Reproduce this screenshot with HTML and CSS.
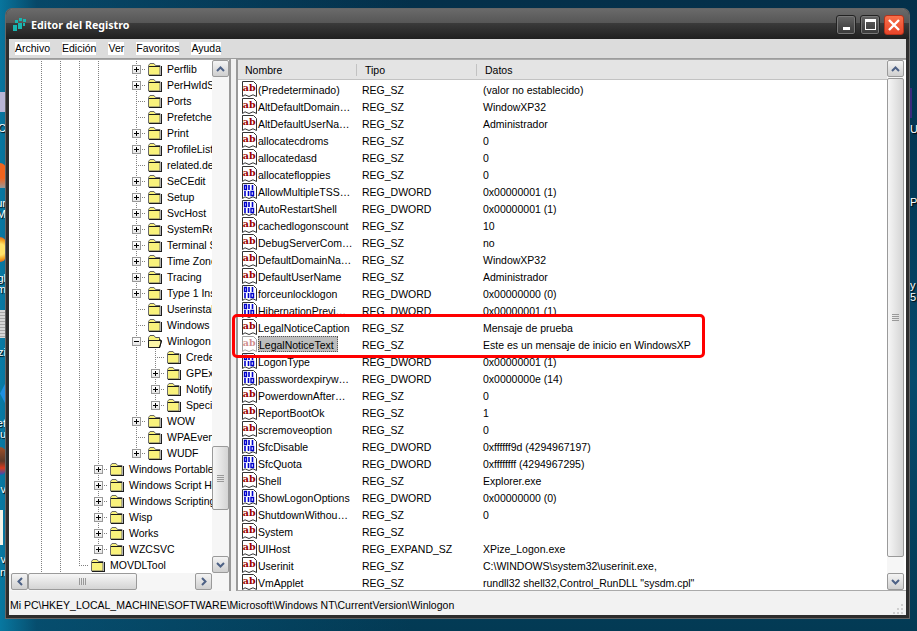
FILE: index.html
```html
<!DOCTYPE html>
<html lang="es">
<head>
  <meta charset="UTF-8" />
  <title>Editor del Registro</title>
  <link rel="stylesheet" href="styles.css">
</head>
<body>
  <svg class="defs" width="0" height="0">
    <symbol id="ab" viewBox="0 0 16 16">
      <path d="M1.5 .5H12.5L15.5 3.5V15.5L12 13.8 8 15.5 4 13.8 1.5 15.5Z" fill="#fff" stroke="#333"/>
      <text x="1.8" y="9.5" class="ab-text">ab</text>
    </symbol>
    <symbol id="bin" viewBox="0 0 16 16">
      <path d="M1.5 .5H12.5L15.5 3.5V15.5L12 13.8 8 15.5 4 13.8 1.5 15.5Z" fill="#fff" stroke="#333"/>
      <path d="M3.5 2.5h2v4h-2zM10 8.5h2.500v4H10z" fill="none" stroke="#00c" stroke-width="1.4"/>
      <path d="M8 2v5M11.500 2v5M4 8v5M7.500 8v5" stroke="#00c" stroke-width="1.6"/>
    </symbol>
    <symbol id="folder" viewBox="0 0 15 15">
      <path d="M1.500 3.500L3 1.500H7L8.500 3.500H13V13H1.500Z" fill="#f9f27c" stroke="#6a6a6a"/>
      <path d="M2 4h11v1H2zM14 4h1v10H2v-1h12z" fill="#1c1c1c"/>
    </symbol>
    <symbol id="folder-open" viewBox="0 0 15 15">
      <path d="M1.500 3.500L3 1.500H7L8.500 3.500H12.500V13.500H1.500Z" fill="#f9f27c" stroke="#555"/>
      <path d="M1.500 6.500H14.500L12.500 13.500H1.500Z" fill="#fbf6a8" stroke="#222"/>
      <path d="M13 5v2h1.500l-2 7" fill="none" stroke="#111"/>
    </symbol>
  </svg>

  <div class="desk-bit bit-lilac"></div>
  <div class="desk-bit bit-orange"></div>
  <div class="desk-bit bit-sun"></div>
  <div class="desk-bit bit-stripe"></div>
  <div class="desk-bit bit-blue"></div>
  <div class="desk-bit bit-fire"></div>
  <div class="desk-bit bit-paper"></div>
  <div class="desk-bit bit-purple"></div>
  <span class="desk-label left lb-1">C</span>
  <span class="desk-label left lb-2">ur</span>
  <span class="desk-label left lb-3">M</span>
  <span class="desk-label left lb-4">gl</span>
  <span class="desk-label left lb-5">m</span>
  <span class="desk-label left lb-6">zi</span>
  <span class="desk-label left lb-7">et</span>
  <span class="desk-label left lb-8">lu</span>
  <span class="desk-label left lb-9">v</span>
  <span class="desk-label left lb-10">v</span>
  <span class="desk-label left lb-11">n</span>
  <span class="desk-label right lb-12">U</span>
  <span class="desk-label right lb-13">Pr</span>
  <span class="desk-label right lb-14">y</span>
  <span class="desk-label right lb-15">5</span>

  <div class="window">
    <div class="titlebar">
      <svg class="app-icon" viewBox="0 0 15 15" width="15" height="15">
        <path d="M1 8h4v6H1zM6 6h4v6H6zM3 3h3v3H3zM7 1h3v3H7zM11 2h3v3h-3zM11 6h2v3h-2z" fill="#19b5b0"/>
      </svg>
      <span class="title">Editor del Registro</span>
      <div class="caption-btns">
        <button class="cap-btn"><span class="ico-min"></span></button>
        <button class="cap-btn"><span class="ico-max"></span></button>
        <button class="cap-btn cap-close">
          <svg viewBox="0 0 12 12" width="12" height="12"><path d="M1 1L11 11M11 1L1 11" stroke="#fff" stroke-width="2.4"/></svg>
        </button>
      </div>
    </div>

    <div class="menubar">
      <span>Archivo</span><span>Edición</span><span>Ver</span><span>Favoritos</span><span>Ayuda</span>
    </div>

    <div class="panes">
      <div class="tree-pane">
        <div class="tree-main">
          <div class="tree-rows">
            <div class="node l5 plus"><b></b><svg><use href="#folder"/></svg><span>Perflib</span></div>
            <div class="node l5 plus"><b></b><svg><use href="#folder"/></svg><span>PerHwIdStorage</span></div>
            <div class="node l5"><b></b><svg><use href="#folder"/></svg><span>Ports</span></div>
            <div class="node l5"><b></b><svg><use href="#folder"/></svg><span>Prefetcher</span></div>
            <div class="node l5 plus"><b></b><svg><use href="#folder"/></svg><span>Print</span></div>
            <div class="node l5 plus"><b></b><svg><use href="#folder"/></svg><span>ProfileList</span></div>
            <div class="node l5"><b></b><svg><use href="#folder"/></svg><span>related.desc</span></div>
            <div class="node l5 plus"><b></b><svg><use href="#folder"/></svg><span>SeCEdit</span></div>
            <div class="node l5 plus"><b></b><svg><use href="#folder"/></svg><span>Setup</span></div>
            <div class="node l5 plus"><b></b><svg><use href="#folder"/></svg><span>SvcHost</span></div>
            <div class="node l5 plus"><b></b><svg><use href="#folder"/></svg><span>SystemRestore</span></div>
            <div class="node l5 plus"><b></b><svg><use href="#folder"/></svg><span>Terminal Server</span></div>
            <div class="node l5 plus"><b></b><svg><use href="#folder"/></svg><span>Time Zones</span></div>
            <div class="node l5 plus"><b></b><svg><use href="#folder"/></svg><span>Tracing</span></div>
            <div class="node l5 plus"><b></b><svg><use href="#folder"/></svg><span>Type 1 Installer</span></div>
            <div class="node l5"><b></b><svg><use href="#folder"/></svg><span>Userinstallable</span></div>
            <div class="node l5"><b></b><svg><use href="#folder"/></svg><span>Windows</span></div>
            <div class="node l5 minus"><b></b><svg><use href="#folder-open"/></svg><span>Winlogon</span></div>
            <div class="node l6"><b></b><svg><use href="#folder"/></svg><span>Credentials</span></div>
            <div class="node l6 plus"><b></b><svg><use href="#folder"/></svg><span>GPExtensions</span></div>
            <div class="node l6 plus"><b></b><svg><use href="#folder"/></svg><span>Notify</span></div>
            <div class="node l6 plus last"><b></b><svg><use href="#folder"/></svg><span>SpecialAccounts</span></div>
            <div class="node l5 plus"><b></b><svg><use href="#folder"/></svg><span>WOW</span></div>
            <div class="node l5"><b></b><svg><use href="#folder"/></svg><span>WPAEvents</span></div>
            <div class="node l5 plus last"><b></b><svg><use href="#folder"/></svg><span>WUDF</span></div>
            <div class="node l3 plus"><b></b><svg><use href="#folder"/></svg><span>Windows Portable Devices</span></div>
            <div class="node l3 plus"><b></b><svg><use href="#folder"/></svg><span>Windows Script Host</span></div>
            <div class="node l3 plus"><b></b><svg><use href="#folder"/></svg><span>Windows Scripting Host</span></div>
            <div class="node l3 plus"><b></b><svg><use href="#folder"/></svg><span>Wisp</span></div>
            <div class="node l3 plus"><b></b><svg><use href="#folder"/></svg><span>Works</span></div>
            <div class="node l3 plus last"><b></b><svg><use href="#folder"/></svg><span>WZCSVC</span></div>
            <div class="node l2 last"><b></b><svg><use href="#folder"/></svg><span>MOVDLTool</span></div>
          </div>
          <div class="vscroll">
            <button class="sb-btn"><svg viewBox="0 0 9 6" width="9" height="6"><path d="M1 5L4.500 1.500 8 5" fill="none" stroke="#4d6185" stroke-width="2"/></svg></button>
            <div class="sb-track tree-track"><div class="sb-thumb tree-thumb"><i></i></div></div>
            <button class="sb-btn"><svg viewBox="0 0 9 6" width="9" height="6"><path d="M1 1L4.500 4.500 8 1" fill="none" stroke="#4d6185" stroke-width="2"/></svg></button>
          </div>
        </div>
        <div class="hscroll">
          <button class="sb-btn"><svg viewBox="0 0 6 9" width="6" height="9"><path d="M5 1L1.500 4.500 5 8" fill="none" stroke="#4d6185" stroke-width="2"/></svg></button>
          <div class="sb-track h-track"><div class="sb-thumb h-thumb"><i></i></div></div>
          <button class="sb-btn"><svg viewBox="0 0 6 9" width="6" height="9"><path d="M1 1L4.500 4.500 1 8" fill="none" stroke="#4d6185" stroke-width="2"/></svg></button>
        </div>
      </div>

      <div class="list-pane">
        <div class="list-main">
          <div class="list-head">
            <span class="c-name">Nombre</span><span class="c-type">Tipo</span><span class="c-data">Datos</span>
          </div>
          <div class="list-rows">
            <div class="row"><svg><use href="#ab"/></svg><span class="c-name">(Predeterminado)</span><span class="c-type">REG_SZ</span><span class="c-data">(valor no establecido)</span></div>
            <div class="row"><svg><use href="#ab"/></svg><span class="c-name">AltDefaultDomain…</span><span class="c-type">REG_SZ</span><span class="c-data">WindowXP32</span></div>
            <div class="row"><svg><use href="#ab"/></svg><span class="c-name">AltDefaultUserNa…</span><span class="c-type">REG_SZ</span><span class="c-data">Administrador</span></div>
            <div class="row"><svg><use href="#ab"/></svg><span class="c-name">allocatecdroms</span><span class="c-type">REG_SZ</span><span class="c-data">0</span></div>
            <div class="row"><svg><use href="#ab"/></svg><span class="c-name">allocatedasd</span><span class="c-type">REG_SZ</span><span class="c-data">0</span></div>
            <div class="row"><svg><use href="#ab"/></svg><span class="c-name">allocatefloppies</span><span class="c-type">REG_SZ</span><span class="c-data">0</span></div>
            <div class="row"><svg><use href="#bin"/></svg><span class="c-name">AllowMultipleTSS…</span><span class="c-type">REG_DWORD</span><span class="c-data">0x00000001 (1)</span></div>
            <div class="row"><svg><use href="#bin"/></svg><span class="c-name">AutoRestartShell</span><span class="c-type">REG_DWORD</span><span class="c-data">0x00000001 (1)</span></div>
            <div class="row"><svg><use href="#ab"/></svg><span class="c-name">cachedlogonscount</span><span class="c-type">REG_SZ</span><span class="c-data">10</span></div>
            <div class="row"><svg><use href="#ab"/></svg><span class="c-name">DebugServerCom…</span><span class="c-type">REG_SZ</span><span class="c-data">no</span></div>
            <div class="row"><svg><use href="#ab"/></svg><span class="c-name">DefaultDomainNa…</span><span class="c-type">REG_SZ</span><span class="c-data">WindowXP32</span></div>
            <div class="row"><svg><use href="#ab"/></svg><span class="c-name">DefaultUserName</span><span class="c-type">REG_SZ</span><span class="c-data">Administrador</span></div>
            <div class="row"><svg><use href="#bin"/></svg><span class="c-name">forceunlocklogon</span><span class="c-type">REG_DWORD</span><span class="c-data">0x00000000 (0)</span></div>
            <div class="row"><svg><use href="#bin"/></svg><span class="c-name">HibernationPrevi…</span><span class="c-type">REG_DWORD</span><span class="c-data">0x00000001 (1)</span></div>
            <div class="row"><svg><use href="#ab"/></svg><span class="c-name">LegalNoticeCaption</span><span class="c-type">REG_SZ</span><span class="c-data">Mensaje de prueba</span></div>
            <div class="row selected"><svg><use href="#ab"/></svg><span class="c-name"><em>LegalNoticeText</em></span><span class="c-type">REG_SZ</span><span class="c-data">Este es un mensaje de inicio en WindowsXP</span></div>
            <div class="row"><svg><use href="#bin"/></svg><span class="c-name">LogonType</span><span class="c-type">REG_DWORD</span><span class="c-data">0x00000001 (1)</span></div>
            <div class="row"><svg><use href="#bin"/></svg><span class="c-name">passwordexpiryw…</span><span class="c-type">REG_DWORD</span><span class="c-data">0x0000000e (14)</span></div>
            <div class="row"><svg><use href="#ab"/></svg><span class="c-name">PowerdownAfter…</span><span class="c-type">REG_SZ</span><span class="c-data">0</span></div>
            <div class="row"><svg><use href="#ab"/></svg><span class="c-name">ReportBootOk</span><span class="c-type">REG_SZ</span><span class="c-data">1</span></div>
            <div class="row"><svg><use href="#ab"/></svg><span class="c-name">scremoveoption</span><span class="c-type">REG_SZ</span><span class="c-data">0</span></div>
            <div class="row"><svg><use href="#bin"/></svg><span class="c-name">SfcDisable</span><span class="c-type">REG_DWORD</span><span class="c-data">0xffffff9d (4294967197)</span></div>
            <div class="row"><svg><use href="#bin"/></svg><span class="c-name">SfcQuota</span><span class="c-type">REG_DWORD</span><span class="c-data">0xffffffff (4294967295)</span></div>
            <div class="row"><svg><use href="#ab"/></svg><span class="c-name">Shell</span><span class="c-type">REG_SZ</span><span class="c-data">Explorer.exe</span></div>
            <div class="row"><svg><use href="#bin"/></svg><span class="c-name">ShowLogonOptions</span><span class="c-type">REG_DWORD</span><span class="c-data">0x00000000 (0)</span></div>
            <div class="row"><svg><use href="#ab"/></svg><span class="c-name">ShutdownWithou…</span><span class="c-type">REG_SZ</span><span class="c-data">0</span></div>
            <div class="row"><svg><use href="#ab"/></svg><span class="c-name">System</span><span class="c-type">REG_SZ</span><span class="c-data"></span></div>
            <div class="row"><svg><use href="#ab"/></svg><span class="c-name">UIHost</span><span class="c-type">REG_EXPAND_SZ</span><span class="c-data">XPize_Logon.exe</span></div>
            <div class="row"><svg><use href="#ab"/></svg><span class="c-name">Userinit</span><span class="c-type">REG_SZ</span><span class="c-data">C:\WINDOWS\system32\userinit.exe,</span></div>
            <div class="row"><svg><use href="#ab"/></svg><span class="c-name">VmApplet</span><span class="c-type">REG_SZ</span><span class="c-data">rundll32 shell32,Control_RunDLL "sysdm.cpl"</span></div>
          </div>
          <div class="callout"></div>
        </div>
        <div class="vscroll">
          <button class="sb-btn"><svg viewBox="0 0 9 6" width="9" height="6"><path d="M1 5L4.500 1.500 8 5" fill="none" stroke="#4d6185" stroke-width="2"/></svg></button>
          <div class="sb-track list-track"><div class="sb-thumb list-thumb"><i></i></div></div>
          <button class="sb-btn"><svg viewBox="0 0 9 6" width="9" height="6"><path d="M1 1L4.500 4.500 8 1" fill="none" stroke="#4d6185" stroke-width="2"/></svg></button>
        </div>
      </div>
    </div>

    <div class="statusbar">
      <span>Mi PC\HKEY_LOCAL_MACHINE\SOFTWARE\Microsoft\Windows NT\CurrentVersion\Winlogon</span>
      <svg class="grip" viewBox="0 0 12 12" width="12" height="12"><path d="M9 1h2v2H9zM9 5h2v2H9zM5 5h2v2H5zM9 9h2v2H9zM5 9h2v2H5zM1 9h2v2H1z" fill="#cfcfcf"/></svg>
    </div>
  </div>
</body>
</html>
```

FILE: styles.css
```css
* {
  box-sizing: border-box;
}
html, body {
  height: 100%;
}
body {
  margin: 0;
  padding: 9px 8px 13px 6px;
  overflow: hidden;
  position: relative;
  font-family: "Liberation Sans", Arial, sans-serif;
  font-size: 10.5px;
  color: #000;
  background:
    linear-gradient(90deg, rgba(10, 140, 185, .75) 0, rgba(10, 100, 140, .45) 4%, rgba(6, 60, 90, 0) 45%),
    linear-gradient(180deg, #04304a 0, #033a58 30%, #054a6c 60%, #033a54 100%);
}
svg {
  display: block;
}
.defs {
  position: absolute;
}
.ab-text {
  font-family: "DejaVu Serif", serif;
  font-size: 9.5px;
  font-weight: bold;
  fill: #990000;
}

/* pedacos dos icones do desktop */
.desk-bit {
  position: absolute;
  left: 0;
  width: 6px;
}
.bit-lilac { top: 92px; height: 20px; background: #b9b6d6; }
.bit-orange { top: 163px; height: 25px; background: linear-gradient(180deg, #f0641e 60%, #999 100%); border-radius: 0 6px 0 0; }
.bit-sun { top: 237px; height: 25px; background: radial-gradient(circle at 0 50%, #ffe36a 40%, #f0a020 70%, #e04020 100%); border-radius: 0 12px 12px 0; }
.bit-stripe { top: 310px; height: 28px; background: repeating-linear-gradient(180deg, #d8d8d8 0 2px, #a9a9a9 2px 3px); }
.bit-blue { top: 382px; height: 23px; background: #1f8fe0; clip-path: polygon(100% 0, 100% 100%, 0 50%); }
.bit-fire { top: 447px; height: 28px; background: linear-gradient(180deg, #a0512a 0, #5c3a2a 50%, #d83a1e 75%, #2a50c0 100%); border-radius: 0 6px 6px 0; }
.bit-paper { top: 510px; height: 35px; width: 3px; background: #f6f4ea; }
.bit-purple { left: 910px; top: 88px; width: 2px; height: 30px; background: #3a2a7c; }

.desk-label {
  position: absolute;
  color: #fff;
  font-size: 11px;
  line-height: 12px;
  text-shadow: 1px 1px 1px #000;
}
.desk-label.left { right: calc(100% - 6px); }
.desk-label.right { left: 910px; }
.lb-1 { top: 122px; }
.lb-2 { top: 197px; }
.lb-3 { top: 208px; }
.lb-4 { top: 272px; }
.lb-5 { top: 283px; }
.lb-6 { top: 346px; }
.lb-7 { top: 417px; }
.lb-8 { top: 428px; }
.lb-9 { top: 483px; }
.lb-10 { top: 553px; }
.lb-11 { top: 566px; }
.lb-12 { top: 123px; }
.lb-13 { top: 196px; }
.lb-14 { top: 279px; }
.lb-15 { top: 291px; }

.window {
  height: 100%;
  position: relative;
  display: flex;
  flex-direction: column;
  background: #dcdcdc;
  border: 3px solid #2d2d2d;
  border-top: 0;
  border-radius: 6px 6px 0 0;
  box-shadow: 0 0 0 1px #666;
}

.titlebar {
  height: 30px;
  flex: none;
  display: flex;
  align-items: center;
  margin: 0 -3px;
  padding: 1px 5px 0 6px;
  border-radius: 6px 6px 0 0;
  background: linear-gradient(180deg, #6a6a6a 0, #565656 46%, #3a3a3a 48%, #1f1f1f 100%);
}
.app-icon {
  margin-right: 4px;
}
.title {
  font-family: "Noto Sans", Arial, sans-serif;
  font-size: 10.7px;
  font-weight: bold;
  color: #fff;
  margin-top: 1px;
}
.caption-btns {
  margin-left: auto;
  display: flex;
  gap: 4px;
}
.cap-btn {
  width: 20px;
  height: 20px;
  padding: 0;
  display: flex;
  align-items: center;
  justify-content: center;
  border: 1px solid #222;
  border-radius: 3px;
  background: linear-gradient(180deg, #666 0, #4c4c4c 50%, #3a3a3a 100%);
  box-shadow: inset 0 0 0 1px #777;
}
.ico-min {
  width: 7px;
  height: 3px;
  margin-top: 7px;
  background: #fff;
}
.ico-max {
  width: 11px;
  height: 11px;
  border: 1px solid #fff;
  border-top-width: 3px;
}
.cap-close {
  border-color: #b8321a;
  background: linear-gradient(180deg, #f8704a 0, #e8452a 100%);
  box-shadow: none;
}

.menubar {
  height: 20px;
  flex: none;
  display: flex;
  align-items: center;
  gap: 12px;
  padding-left: 6px;
  background: #dcdcdc;
  border-bottom: 1px solid #9c9c9c;
}
.menubar span {
  background: #fff;
  height: 13px;
  line-height: 13px;
}

.panes {
  flex: 1;
  min-height: 0;
  display: flex;
  gap: 5px;
  background: #f0f0f0;
}

.tree-pane {
  width: 222px;
  flex: none;
  display: flex;
  flex-direction: column;
  background: #fff;
  border-right: 2px solid #999;
  border-top: 1px solid #aaa;
}
.tree-main {
  height: 515px;
  display: flex;
  overflow: hidden;
}
.tree-rows {
  width: 204px;
  padding-top: 1px;
  overflow: hidden;
}
.node {
  --dot-v: repeating-linear-gradient(180deg, #808080 0 1px, transparent 1px 2px);
  --dot-h: repeating-linear-gradient(90deg, #808080 0 1px, transparent 1px 2px);
  --v-len: 16px;
  height: 16px;
  display: flex;
  align-items: center;
  position: relative;
  white-space: nowrap;
  /* linhas pontilhadas da arvore */
  background-image: var(--dot-v), var(--dot-v), var(--dot-v), var(--dot-v);
  background-size: 1px 16px;
  background-repeat: no-repeat;
  background-position: 32px 0, 51px 0, 70px 0, 89px 0;
}
.last {
  --v-len: 9px;
}
.node b {
  width: 19px;
  height: 16px;
  flex: none;
  background-image: var(--dot-h), var(--dot-v);
  background-size: 10px 1px, 1px var(--v-len);
  background-position: 9px 8px, 9px 0;
  background-repeat: no-repeat;
}
.node.plus b {
  background-image: linear-gradient(#000, #000), linear-gradient(#000, #000), linear-gradient(#fff, #e6e6e6), linear-gradient(#999, #999), var(--dot-h), var(--dot-v);
  background-size: 5px 1px, 1px 5px, 7px 7px, 9px 9px, 10px 1px, 1px var(--v-len);
  background-position: 7px 8px, 9px 6px, 6px 5px, 5px 4px, 9px 8px, 9px 0;
}
.node.minus b {
  background-image: linear-gradient(#000, #000), linear-gradient(#fff, #e6e6e6), linear-gradient(#999, #999), var(--dot-h), var(--dot-v);
  background-size: 5px 1px, 7px 7px, 9px 9px, 10px 1px, 1px var(--v-len);
  background-position: 7px 8px, 6px 5px, 5px 4px, 9px 8px, 9px 0;
}
.l2 { padding-left: 61px; background-size: 1px 16px, 1px 16px, 0 0, 0 0; }
.l3 { padding-left: 80px; background-size: 1px 16px, 1px 16px, 1px 16px, 0 0; }
.l5 { padding-left: 118px; }
.l6 { padding-left: 137px; }
.l6::before {
  content: "";
  position: absolute;
  left: 127px;
  top: 0;
  width: 1px;
  height: 16px;
  background: var(--dot-v);
}
.node svg {
  width: 15px;
  height: 15px;
  flex: none;
  margin: 0 5px 0 1px;
}
.node span {
  position: relative;
  line-height: 14px;
  margin-top: -1px;
}

.vscroll {
  width: 17px;
  flex: none;
  display: flex;
  flex-direction: column;
  background: #f6f6f6;
}
.sb-btn {
  width: 17px;
  height: 17px;
  flex: none;
  padding: 0;
  display: flex;
  align-items: center;
  justify-content: center;
  border: 1px solid #9a9a9a;
  border-radius: 2px;
  background: linear-gradient(180deg, #f4f4f4, #cfcfcf);
}
.sb-track {
  flex: 1;
  position: relative;
}
.sb-thumb {
  position: absolute;
  display: flex;
  align-items: center;
  justify-content: center;
  border: 1px solid #9a9a9a;
  border-radius: 2px;
  background: linear-gradient(90deg, #f6f6f6, #d4d4d4);
}
.sb-thumb i {
  width: 7px;
  height: 7px;
  background: repeating-linear-gradient(180deg, #999 0 1px, transparent 1px 2px);
}
.tree-thumb {
  left: 0;
  right: 0;
  top: 369px;
  height: 64px;
}
.list-thumb {
  left: 0;
  right: 0;
  top: 1px;
  height: 479px;
}
.hscroll {
  height: 18px;
  flex: none;
  display: flex;
  padding-left: 2px;
  padding-right: 17px;
  background: #f6f6f6;
}
.h-track {
  flex: 1;
}
.h-thumb {
  left: 0;
  top: 0;
  width: 109px;
  height: 17px;
  background: linear-gradient(180deg, #f6f6f6, #d4d4d4);
}
.h-thumb i {
  background: repeating-linear-gradient(90deg, #999 0 1px, transparent 1px 2px);
}

.list-pane {
  flex: 1;
  min-width: 0;
  display: flex;
  background: #fff;
  border-left: 2px solid #999;
  border-top: 1px solid #aaa;
  border-bottom: 1px solid #aaa;
  padding-right: 2px;
}
.list-main {
  flex: 1;
  min-width: 0;
  position: relative;
}
.list-head {
  height: 20px;
  display: flex;
  align-items: center;
  background: #e4e4e4;
  border-bottom: 1px solid #c2c2c2;
}
.list-head .c-name {
  width: 119px;
  padding-left: 7px;
  border-right: 1px solid #c2c2c2;
}
.list-head .c-type {
  width: 120px;
  padding-left: 8px;
  border-right: 1px solid #c2c2c2;
}
.list-head .c-data {
  padding-left: 8px;
}
.list-rows {
  padding-top: 1px;
  overflow: hidden;
}
.row {
  height: 17px;
  display: flex;
  align-items: flex-start;
  line-height: 19px;
  white-space: nowrap;
}
.row svg {
  width: 16px;
  height: 16px;
  flex: none;
  margin-left: 3px;
}
.row .c-name {
  width: 105px;
  padding-left: 1px;
  overflow: hidden;
}
.row .c-type {
  width: 121px;
}
.selected svg {
  opacity: .45;
}
.selected em {
  font-style: normal;
  display: block;
  width: fit-content;
  height: 16px;
  padding: 0 4px 0 1px;
  background: #bdbdbd;
  outline: 1px dotted #555;
  outline-offset: -1px;
}
.callout {
  position: absolute;
  left: -6px;
  top: 254px;
  width: 473px;
  height: 44px;
  border: 3px solid #f00;
  border-radius: 5px;
}

.statusbar {
  height: 24px;
  flex: none;
  display: flex;
  align-items: center;
  justify-content: space-between;
  padding: 4px 2px 0 1px;
  background: #f2f2f2;
}
.grip {
  align-self: flex-end;
}
```
